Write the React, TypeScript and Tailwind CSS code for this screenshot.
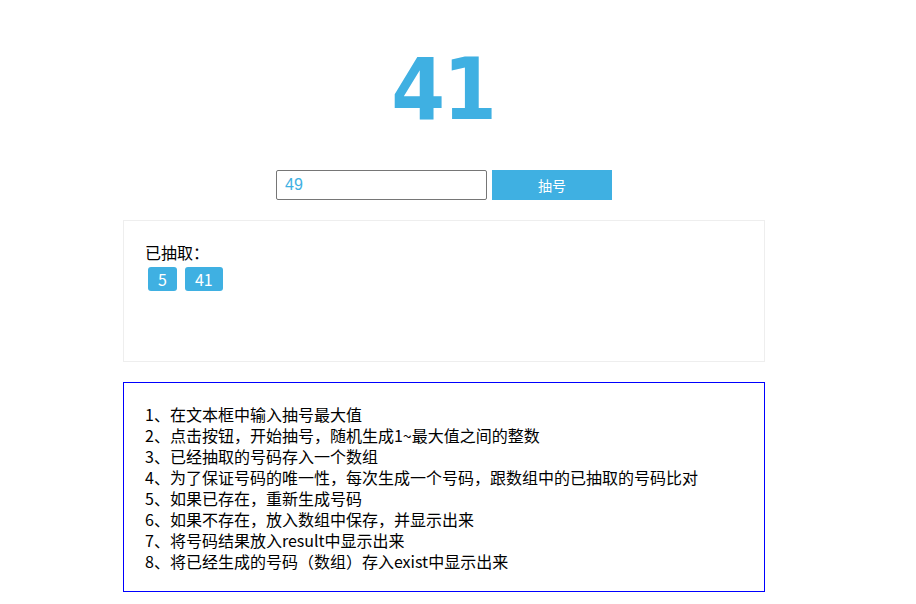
export default function App() {
  const lines = [
    "1、在文本框中输入抽号最大值",
    "2、点击按钮，开始抽号，随机生成1~最大值之间的整数",
    "3、已经抽取的号码存入一个数组",
    "4、为了保证号码的唯一性，每次生成一个号码，跟数组中的已抽取的号码比对",
    "5、如果已存在，重新生成号码",
    "6、如果不存在，放入数组中保存，并显示出来",
    "7、将号码结果放入result中显示出来",
    "8、将已经生成的号码（数组）存入exist中显示出来",
  ];
  const font = { fontFamily: '"Noto Sans CJK SC", "Liberation Sans", sans-serif' };
  return (
    <div className="w-[916px] h-[604px] bg-white text-black" style={font}>
      <div className="ml-[123px] w-[642px] flex flex-col">
        <div className="h-[160px] flex items-center justify-center pt-[18px]">
          <div
            className="text-[86px] font-bold leading-none text-[#3fb0e2] tracking-[-2px] ml-[-2px]"
            style={{ fontFamily: '"DejaVu Sans Condensed", "DejaVu Sans", sans-serif', fontStretch: "condensed" }}
          >
            41
          </div>
        </div>
        <div className="flex justify-center items-center gap-[5px] mt-[9px] h-[31px]">
          <input
            defaultValue="49"
            className="w-[211px] h-[30px] border border-[#767676] rounded-[2px] px-[8px] text-[16px] text-[#3fb0e2] outline-none"
            style={{ fontFamily: '"Liberation Sans", sans-serif' }}
          />
          <button className="w-[120px] h-[30px] bg-[#3fb0e2] text-white text-[14px] leading-none">
            抽号
          </button>
        </div>
        <div className="mt-[20px] h-[142px] border border-[#eeeeee] px-[21px] pt-[21px]">
          <div className="text-[16px] leading-[21px]">已抽取：</div>
          <div className="flex gap-[8px] mt-[4px] ml-[3px]">
            <span className="h-[24px] px-[10px] rounded-[3px] bg-[#3fb0e2] text-white text-[16px] leading-[24px]">5</span>
            <span className="h-[24px] px-[10px] rounded-[3px] bg-[#3fb0e2] text-white text-[16px] leading-[24px]">41</span>
          </div>
        </div>
        <div className="mt-[20px] h-[210px] border border-[#0000ff] px-[21px] pt-[21px]">
          {lines.map((l) => (
            <div key={l} className="text-[16px] leading-[21px] whitespace-nowrap">
              {l}
            </div>
          ))}
        </div>
      </div>
    </div>
  );
}
